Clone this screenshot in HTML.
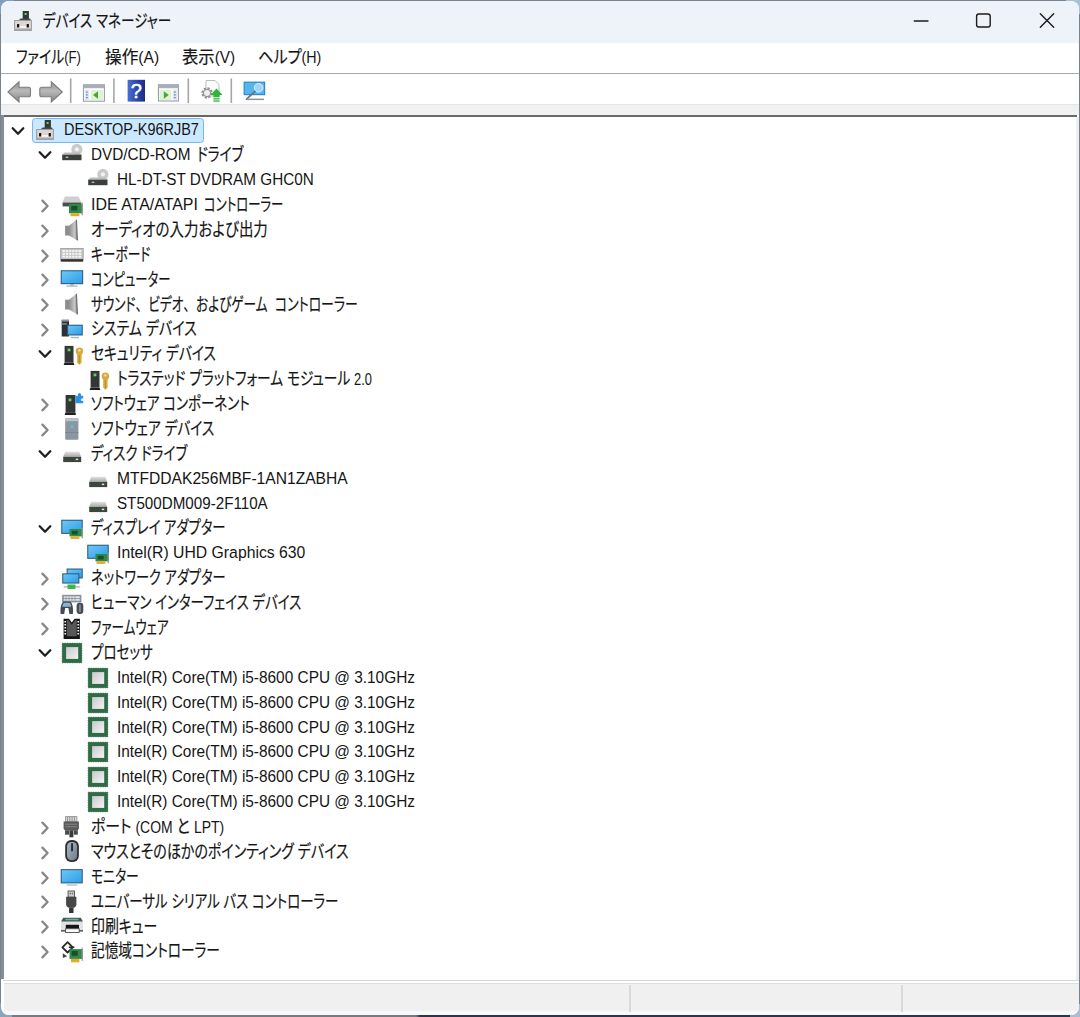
<!DOCTYPE html>
<html lang="ja"><head><meta charset="utf-8"><title>デバイス マネージャー</title>
<style>
html,body{margin:0;padding:0}
body{width:1080px;height:1017px;overflow:hidden;position:relative;background:#79838e;
 font-family:"Liberation Sans","Noto Sans CJK JP",sans-serif;color:#151515}
.bgtl{position:absolute;left:0;top:0;width:14px;height:14px;background:#7f9fc0}
.bgtr{position:absolute;right:0;top:0;width:14px;height:14px;background:#a5c2da}
.bgbot{position:absolute;left:0;top:1008px;width:1080px;height:9px;background:linear-gradient(90deg,#757b82 0,#757b82 416px,#2b3450 420px,#2b3450 100%)}
.bgbr{position:absolute;right:0;top:1004px;width:10px;height:13px;background:#a9bdd2}
.bgbl{position:absolute;left:0;top:1003px;width:12px;height:14px;background:#8aa4ba}
.win{position:absolute;left:1px;top:1px;width:1078px;height:1014px;border-radius:8px;background:#fff;overflow:hidden}
.titlebar{position:absolute;left:0;top:0;width:1078px;height:41.6px;background:#eef3fa}
.menusep{position:absolute;left:0;top:72.1px;width:1078px;height:1.3px;background:#a8a8a8}
.band{position:absolute;left:0;top:103.2px;width:1078px;height:11.3px;background:#f1f1f1;border-top:1px solid #e6e6e6;box-sizing:border-box}
.treetop{position:absolute;left:2px;top:114.1px;width:1073.5px;height:2.1px;background:#686868}
.treeleft{position:absolute;left:0;top:114.1px;width:2.8px;height:864.2px;background:#858d96}
.status{position:absolute;left:2.5px;top:982.2px;width:1078px;height:27.6px;background:#f0f0f0;border-top:1px solid #dedede;box-sizing:border-box}
.sline{position:absolute;left:2px;top:979px;width:1076px;height:1px;background:#d6d6d6}
.sbot{position:absolute;left:0;top:1009.8px;width:1078px;height:5px;background:#f8f8fa}
.ssep{position:absolute;top:984.3px;width:1.8px;height:27px;background:#d9d9d9}
.t{position:absolute;white-space:nowrap;line-height:30px;height:30px;transform-origin:0 50%;
 font-feature-settings:"palt";letter-spacing:0}
.j{-webkit-text-stroke:0.2px #151515}
.a{font-size:0.94em;-webkit-text-stroke:0}
.p{font-feature-settings:normal}
.sel{position:absolute;left:31px;top:116.6px;width:169.6px;height:23px;background:#cce8ff;border:1.2px solid #74b8ee;border-radius:3.5px}
svg{position:absolute;overflow:visible}
</style></head><body>
<div class="bgtl"></div><div class="bgtr"></div><div class="bgbot"></div><div class="bgbl"></div><div class="bgbr"></div>
<div class="win">
<div class="titlebar"></div>
<div class="menusep"></div>
<div class="band"></div>
<div class="treetop"></div>
<div class="treeleft"></div>
<div style="position:absolute;left:1075px;top:116px;width:3px;height:864px;background:#eeeeee"></div>
<div class="sline"></div>
<div class="status"></div>
<div class="sbot"></div>
<div class="ssep" style="left:628px"></div>
<div class="ssep" style="left:899.8px"></div>
<div class="sel"></div>

<div style="position:absolute;left:-1px;top:-1px;width:1080px;height:1017px">
<svg style="left:10.6px;top:9.1px" width="24" height="24" viewBox="-12 -12 24 24"><g transform="scale(1.0)"><rect x="-0.3" y="-10" width="6.2" height="9.5" fill="#2c3a32"/><rect x="1.6" y="-8" width="2" height="2" fill="#7fc47f"/><path d="M-4.5 -0.5L-2.5 -2.5H7L8 -0.5Z" fill="#4a4a4a"/><rect x="-8.4" y="-0.5" width="16.8" height="10" fill="#dcd6d6" stroke="#9b9b9b" stroke-width="1"/><rect x="-8.4" y="7.6" width="16.8" height="1.9" fill="#a9a9a9"/><rect x="-6" y="3" width="2.2" height="3.4" rx="0.6" fill="#111"/><rect x="3.7" y="3" width="2.2" height="3.4" rx="0.6" fill="#111"/><rect x="-3" y="5.2" width="6" height="1.4" fill="#fff"/></g></svg>
<span class="t j" id="title" style="left:42.5px;top:6.00px;font-size:17.57px;transform:scaleX(0.7711);">デバイス マネージャー</span>
<svg style="left:899.8px;top:0" width="170" height="41" viewBox="900 0 170 41" fill="none" stroke="#1b1b1b" stroke-width="1.4" stroke-linecap="round">
<path d="M914.3 21H928"/>
<rect x="976.6" y="14" width="13.6" height="13" rx="2.2"/>
<path d="M1040.3 13.8L1053.7 27.3M1053.7 13.8L1040.3 27.3"/></svg>
<span class="t j" id="m1" style="left:15.5px;top:41.80px;font-size:17.57px;transform:scaleX(0.7927);">ファイル<span class="a">(F)</span></span>
<span class="t j" id="m2" style="left:104.5px;top:41.80px;font-size:17.57px;transform:scaleX(0.9474);">操作<span class="a">(A)</span></span>
<span class="t j" id="m3" style="left:181.5px;top:41.80px;font-size:17.57px;transform:scaleX(0.9298);">表示<span class="a">(V)</span></span>
<span class="t j" id="m4" style="left:257.5px;top:41.80px;font-size:17.57px;transform:scaleX(0.8630);">ヘルプ<span class="a">(H)</span></span>
<svg width="0" height="0" style="left:0;top:0"><defs>
<linearGradient id="gscr" x1="0" y1="0" x2="1" y2="1"><stop offset="0" stop-color="#6cc6f7"/><stop offset="1" stop-color="#2e9fe6"/></linearGradient>
<linearGradient id="ggray" x1="0" y1="0" x2="0" y2="1"><stop offset="0" stop-color="#e2e2e2"/><stop offset="1" stop-color="#a8a8a8"/></linearGradient>
<linearGradient id="gspk" x1="0" y1="0" x2="1" y2="0"><stop offset="0" stop-color="#8e8e8e"/><stop offset="0.7" stop-color="#c9c9c9"/><stop offset="1" stop-color="#7a7a7a"/></linearGradient>
<linearGradient id="gmouse" x1="0" y1="0" x2="1" y2="1"><stop offset="0" stop-color="#a9b6c2"/><stop offset="1" stop-color="#6f7d8b"/></linearGradient>
<linearGradient id="ghelp" x1="0" y1="0" x2="1" y2="0"><stop offset="0" stop-color="#4a6fd0"/><stop offset="0.5" stop-color="#2d49ad"/><stop offset="1" stop-color="#1a2b86"/></linearGradient>
<linearGradient id="gcpu" x1="0" y1="0" x2="1" y2="1"><stop offset="0" stop-color="#c9c9c9"/><stop offset="1" stop-color="#f4f4f4"/></linearGradient>
<linearGradient id="garr" x1="0" y1="0" x2="0" y2="1"><stop offset="0" stop-color="#8f8f8f"/><stop offset="0.45" stop-color="#b9b9b9"/><stop offset="1" stop-color="#858585"/></linearGradient>
</defs></svg><svg style="left:0;top:74px" width="300" height="32" viewBox="0 74 300 32"><path d="M8 92L19 81.8V87.2H28.5Q30.5 87.2 30.5 89.2V94.8Q30.5 96.8 28.5 96.8H19V102Z" fill="url(#garr)" stroke="#7c7c7c" stroke-width="1.1"/><path d="M62.3 92L51.3 81.8V87.2H41.8Q39.8 87.2 39.8 89.2V94.8Q39.8 96.8 41.8 96.8H51.3V102Z" fill="url(#garr)" stroke="#7c7c7c" stroke-width="1.1"/><rect x="69.9" y="78.5" width="1.6" height="24.5" fill="#a6a6a6"/><rect x="113.10000000000001" y="78.5" width="1.6" height="24.5" fill="#a6a6a6"/><rect x="187.5" y="78.5" width="1.6" height="24.5" fill="#a6a6a6"/><rect x="230.5" y="78.5" width="1.6" height="24.5" fill="#a6a6a6"/><rect x="83.4" y="84.8" width="21" height="16.4" fill="#fdfdfd" stroke="#8f97a3" stroke-width="1"/><rect x="83.4" y="84.8" width="21" height="3.4" fill="#a9afb8"/><rect x="84.6" y="89.6" width="4.6" height="10.6" fill="#dfe6f3"/><path d="M86.9 91.5v1.2M86.9 94.3v1.2M86.9 97.1v1.2" stroke="#6a7fb5" stroke-width="1.6"/><rect x="90.8" y="90" width="12.4" height="10" fill="#dff3d2"/><path d="M93 95L98 91.3V98.7Z" fill="#4aa53a"/><rect x="127.6" y="79.8" width="17.4" height="21.8" fill="url(#ghelp)"/><text x="136.3" y="98" font-size="20" font-weight="normal" stroke="#fff" stroke-width="0.5" font-family="Liberation Sans,sans-serif" fill="#fff" text-anchor="middle">?</text><rect x="158.4" y="84.8" width="20" height="16.2" fill="#fdfdfd" stroke="#8f97a3" stroke-width="1"/><rect x="158.4" y="84.8" width="20" height="3.4" fill="#a9afb8"/><rect x="172.6" y="89.6" width="4.6" height="10.4" fill="#dfe6f3"/><path d="M174.9 91.5v1.2M174.9 94.3v1.2M174.9 97.1v1.2" stroke="#6a7fb5" stroke-width="1.6"/><rect x="159.6" y="90" width="11.6" height="10" fill="#dff3d2"/><path d="M168.8 95L163.8 91.3V98.7Z" fill="#4aa53a"/><path d="M206 80.5H215L219 84.5V96H206Z" fill="#fbfbfb" stroke="#b5b5b5" stroke-width="0.9"/><circle cx="207" cy="93" r="4.6" fill="#e9e9e9" stroke="#8e8e8e" stroke-width="2.2" stroke-dasharray="2.1 1.5"/><circle cx="207" cy="93" r="3.6" fill="#efefef" stroke="#8e8e8e" stroke-width="1"/><path d="M216.5 88.5L222.6 95H219.6V97.2H213.4V95H210.4Z" fill="#2fb53a"/><rect x="213.4" y="98.2" width="6.2" height="1.3" fill="#2fb53a"/><rect x="213.4" y="100.4" width="6.2" height="1.3" fill="#2fb53a"/><rect x="243.6" y="81.6" width="21.6" height="13.6" fill="#2f86c7"/><rect x="244.7" y="82.7" width="19.4" height="11.4" fill="#56b4ee"/><circle cx="258.6" cy="87.8" r="4.3" fill="#9fd6f5" stroke="#d9eefb" stroke-width="1"/><path d="M255.4 91L246 99.6" stroke="#6a7680" stroke-width="1.7"/><rect x="247" y="98.6" width="17" height="1.5" fill="#8a949c"/></svg>
<svg style="left:10.4px;top:122.50px" width="16" height="16" viewBox="-8 -8 16 16"><path d="M-5.3 -2.7L0 2.7L5.3 -2.7" fill="none" stroke="#1f1f1f" stroke-width="2.3" stroke-linecap="round" stroke-linejoin="round"/></svg>
<svg style="left:33.0px;top:118.30px" width="24" height="24" viewBox="-12 -12 24 24"><rect x="-0.3" y="-10" width="6.2" height="9.5" fill="#2c3a32"/><rect x="1.6" y="-8" width="2" height="2" fill="#7fc47f"/><path d="M-4.5 -0.5L-2.5 -2.5H7L8 -0.5Z" fill="#4a4a4a"/><rect x="-8.4" y="-0.5" width="16.8" height="10" fill="#dcd6d6" stroke="#9b9b9b" stroke-width="1"/><rect x="-8.4" y="7.6" width="16.8" height="1.9" fill="#a9a9a9"/><rect x="-6" y="3" width="2.2" height="3.4" rx="0.6" fill="#111"/><rect x="3.7" y="3" width="2.2" height="3.4" rx="0.6" fill="#111"/><rect x="-3" y="5.2" width="6" height="1.4" fill="#fff"/></svg>
<span class="t" id="r0" style="left:63.7px;top:115.40px;font-size:16.7px;transform:scaleX(0.8673);">DESKTOP-K96RJB7</span>
<svg style="left:36.8px;top:147.38px" width="16" height="16" viewBox="-8 -8 16 16"><path d="M-5.3 -2.7L0 2.7L5.3 -2.7" fill="none" stroke="#1f1f1f" stroke-width="2.3" stroke-linecap="round" stroke-linejoin="round"/></svg>
<svg style="left:59.8px;top:143.18px" width="24" height="24" viewBox="-12 -12 24 24"><circle cx="4.9" cy="-5.6" r="5.6" fill="#c9c9c9"/><circle cx="4.9" cy="-5.6" r="2.1" fill="#f2f2f2"/><path d="M-9.8 -0.4L-7.5 -2.6H7.5L9.5 -0.4Z" fill="#bdbdbd"/><rect x="-9.8" y="-0.4" width="19.3" height="5.6" fill="#3b403c"/><rect x="-6.3" y="1.6" width="2.6" height="1.3" fill="#b9c9b9"/></svg>
<span class="t" id="r1_0" style="left:90.5px;top:140.28px;font-size:16.7px;transform:scaleX(0.9167);">DVD/CD-ROM</span>
<span class="t j" id="r1_1" style="left:197.0px;top:140.28px;font-size:17.79px;transform:scaleX(0.7656);">ドライブ</span>
<svg style="left:85.9px;top:168.06px" width="24" height="24" viewBox="-12 -12 24 24"><circle cx="4.9" cy="-5.6" r="5.6" fill="#c9c9c9"/><circle cx="4.9" cy="-5.6" r="2.1" fill="#f2f2f2"/><path d="M-9.8 -0.4L-7.5 -2.6H7.5L9.5 -0.4Z" fill="#bdbdbd"/><rect x="-9.8" y="-0.4" width="19.3" height="5.6" fill="#3b403c"/><rect x="-6.3" y="1.6" width="2.6" height="1.3" fill="#b9c9b9"/></svg>
<span class="t" id="r2" style="left:117.0px;top:165.16px;font-size:16.7px;transform:scaleX(0.9163);">HL-DT-ST DVDRAM GHC0N</span>
<svg style="left:36.8px;top:197.84px" width="16" height="16" viewBox="-8 -8 16 16"><path d="M-2.6 -5.4L2.6 0L-2.6 5.4" fill="none" stroke="#878787" stroke-width="2.3" stroke-linecap="round" stroke-linejoin="round"/></svg>
<svg style="left:59.8px;top:192.94px" width="24" height="24" viewBox="-12 -12 24 24"><path d="M-9.4 -2.5L-7.2 -8.4H6.6L9.3 -2.5Z" fill="#cfcfcf"/><rect x="-9.4" y="-2.5" width="18.7" height="3.9" fill="#4b4f4c"/><rect x="-3" y="-1" width="13.8" height="9.3" fill="#2f8a4a"/><rect x="-0.7999999999999998" y="0.8" width="6.2" height="4.7" fill="#17502a"/><rect x="9.600000000000001" y="-2.5" width="1.2" height="12.8" fill="#9a9a9a"/><rect x="-1.5" y="8.3" width="8.9" height="2.8999999999999986" fill="#e7a926"/></svg>
<span class="t" id="r3_0" style="left:90.5px;top:190.04px;font-size:16.7px;transform:scaleX(0.9554);">IDE ATA/ATAPI</span>
<span class="t j" id="r3_1" style="left:203.7px;top:190.04px;font-size:17.79px;transform:scaleX(0.6956);">コントローラー</span>
<svg style="left:36.8px;top:222.72px" width="16" height="16" viewBox="-8 -8 16 16"><path d="M-2.6 -5.4L2.6 0L-2.6 5.4" fill="none" stroke="#878787" stroke-width="2.3" stroke-linecap="round" stroke-linejoin="round"/></svg>
<svg style="left:59.8px;top:217.82px" width="24" height="24" viewBox="-12 -12 24 24"><rect x="-6.9" y="-4.3" width="4.2" height="9.8" fill="#8d8d8d"/><path d="M-3 -4.3L4.4 -10.2L5.4 10.4L-3 5.5Z" fill="url(#gspk)"/><path d="M4.4 -10.2L5.4 10.4" stroke="#6e6e6e" stroke-width="1.2"/></svg>
<span class="t j" id="r4" style="left:90.5px;top:214.92px;font-size:17.79px;transform:scaleX(0.8134);">オーディオの入力および出力</span>
<svg style="left:36.8px;top:247.60px" width="16" height="16" viewBox="-8 -8 16 16"><path d="M-2.6 -5.4L2.6 0L-2.6 5.4" fill="none" stroke="#878787" stroke-width="2.3" stroke-linecap="round" stroke-linejoin="round"/></svg>
<svg style="left:59.8px;top:242.70px" width="24" height="24" viewBox="-12 -12 24 24"><rect x="-11.3" y="-6.6" width="22.5" height="11" fill="#c4c4c4" stroke="#9a9a9a" stroke-width="0.8"/><rect x="-9.6" y="-4.9" width="19" height="1.9" fill="#f6f6f6"/><rect x="-9.6" y="-2.1" width="19" height="1.9" fill="#f6f6f6"/><rect x="-9.6" y="0.7" width="19" height="1.9" fill="#f6f6f6"/><path d="M-6.5 -5V2.6M-3.4 -5V2.6M-0.3 -5V2.6M2.8 -5V2.6M5.9 -5V2.6" stroke="#c4c4c4" stroke-width="0.9"/><rect x="-11.3" y="4.2" width="22.5" height="2.5" fill="#333"/></svg>
<span class="t j" id="r5" style="left:90.5px;top:239.80px;font-size:17.79px;transform:scaleX(0.7169);">キーボード</span>
<svg style="left:36.8px;top:272.48px" width="16" height="16" viewBox="-8 -8 16 16"><path d="M-2.6 -5.4L2.6 0L-2.6 5.4" fill="none" stroke="#878787" stroke-width="2.3" stroke-linecap="round" stroke-linejoin="round"/></svg>
<svg style="left:59.8px;top:267.58px" width="24" height="24" viewBox="-12 -12 24 24"><rect x="-11.3" y="-9.8" width="22.5" height="14.0" fill="#2f5f86"/><rect x="-10.200000000000001" y="-8.700000000000001" width="20.3" height="11.8" fill="url(#gscr)"/><rect x="-2" y="4.2" width="4" height="1.4" fill="#9aa2a8"/><rect x="-5.5" y="5.4" width="11" height="1.5" fill="#b8bec4"/></svg>
<span class="t j" id="r6" style="left:90.5px;top:264.68px;font-size:17.79px;transform:scaleX(0.6913);">コンピューター</span>
<svg style="left:36.8px;top:297.36px" width="16" height="16" viewBox="-8 -8 16 16"><path d="M-2.6 -5.4L2.6 0L-2.6 5.4" fill="none" stroke="#878787" stroke-width="2.3" stroke-linecap="round" stroke-linejoin="round"/></svg>
<svg style="left:59.8px;top:292.46px" width="24" height="24" viewBox="-12 -12 24 24"><rect x="-6.9" y="-4.3" width="4.2" height="9.8" fill="#8d8d8d"/><path d="M-3 -4.3L4.4 -10.2L5.4 10.4L-3 5.5Z" fill="url(#gspk)"/><path d="M4.4 -10.2L5.4 10.4" stroke="#6e6e6e" stroke-width="1.2"/></svg>
<span class="t j" id="r7_0" style="left:90.5px;top:289.56px;font-size:17.79px;transform:scaleX(0.7113);">サウンド<span class="p">、</span>ビデオ<span class="p">、</span>およびゲーム</span>
<span class="t j" id="r7_1" style="left:275.0px;top:289.56px;font-size:17.79px;transform:scaleX(0.7246);">コントローラー</span>
<svg style="left:36.8px;top:322.24px" width="16" height="16" viewBox="-8 -8 16 16"><path d="M-2.6 -5.4L2.6 0L-2.6 5.4" fill="none" stroke="#878787" stroke-width="2.3" stroke-linecap="round" stroke-linejoin="round"/></svg>
<svg style="left:59.8px;top:317.34px" width="24" height="24" viewBox="-12 -12 24 24"><rect x="-10.3" y="-9.2" width="7.3" height="16.7" fill="#2c3136"/><rect x="-10.3" y="-9.2" width="7.3" height="1.8" fill="#8b9299"/><rect x="-10.3" y="-5.8" width="5" height="1.4" fill="#8b9299"/><rect x="-4.9" y="-4.3" width="15.700000000000001" height="10.8" fill="#2f5f86"/><rect x="-3.8000000000000003" y="-3.1999999999999997" width="13.5" height="8.600000000000001" fill="url(#gscr)"/><rect x="-1" y="7.8" width="8" height="1.4" fill="#a9b3bb"/></svg>
<span class="t j" id="r8" style="left:90.5px;top:314.44px;font-size:17.79px;transform:scaleX(0.7873);">システム デバイス</span>
<svg style="left:36.8px;top:346.42px" width="16" height="16" viewBox="-8 -8 16 16"><path d="M-5.3 -2.7L0 2.7L5.3 -2.7" fill="none" stroke="#1f1f1f" stroke-width="2.3" stroke-linecap="round" stroke-linejoin="round"/></svg>
<svg style="left:59.8px;top:342.22px" width="24" height="24" viewBox="-12 -12 24 24"><rect x="-7.4" y="-8.1" width="8.9" height="16.5" fill="#333735"/><path d="M-7.4 8.4L-8.4 11L2.4 11L1.5 8.4Z" fill="#1e1e1e"/><rect x="-4.4" y="-5.5" width="2.8" height="2.8" fill="#5fd35f"/><circle cx="7.4" cy="-2.7" r="3.7" fill="#d8a93c"/><circle cx="7.4" cy="-3.6" r="1.2" fill="#f6e2a4"/><path d="M5.2 0H9.6V8.8L7.4 10.8L5.2 8.8Z" fill="#d8a93c"/><path d="M7.4 1V9.5" stroke="#b98a28" stroke-width="0.9"/></svg>
<span class="t j" id="r9" style="left:90.5px;top:339.32px;font-size:17.79px;transform:scaleX(0.7733);">セキュリティ デバイス</span>
<svg style="left:85.9px;top:367.10px" width="24" height="24" viewBox="-12 -12 24 24"><rect x="-7.4" y="-8.1" width="8.9" height="16.5" fill="#333735"/><path d="M-7.4 8.4L-8.4 11L2.4 11L1.5 8.4Z" fill="#1e1e1e"/><rect x="-4.4" y="-5.5" width="2.8" height="2.8" fill="#5fd35f"/><circle cx="7.4" cy="-2.7" r="3.7" fill="#d8a93c"/><circle cx="7.4" cy="-3.6" r="1.2" fill="#f6e2a4"/><path d="M5.2 0H9.6V8.8L7.4 10.8L5.2 8.8Z" fill="#d8a93c"/><path d="M7.4 1V9.5" stroke="#b98a28" stroke-width="0.9"/></svg>
<span class="t j" id="r10" style="left:117.0px;top:364.20px;font-size:17.79px;transform:scaleX(0.7704);">トラステッド プラットフォーム モジュール <span class="a">2.0</span></span>
<svg style="left:36.8px;top:396.88px" width="16" height="16" viewBox="-8 -8 16 16"><path d="M-2.6 -5.4L2.6 0L-2.6 5.4" fill="none" stroke="#878787" stroke-width="2.3" stroke-linecap="round" stroke-linejoin="round"/></svg>
<svg style="left:59.8px;top:391.98px" width="24" height="24" viewBox="-12 -12 24 24"><rect x="-6.4" y="-9" width="9.8" height="17.6" fill="#333735"/><path d="M-6.4 8.6L-7.4 11.1L3.9 11.1L3.4 8.6Z" fill="#1e1e1e"/><rect x="-3.4" y="-5.5" width="2.8" height="2.8" fill="#5fd35f"/><path d="M3.4 -8.2H6V-9.6A1.5 1.5 0 0 1 9 -9.6V-8.2H11.2V-5.6H9.9A1.4 1.4 0 0 0 9.9 -2.9H11.2V-0.7H3.4Z" fill="#2f8fe3"/></svg>
<span class="t j" id="r11" style="left:90.5px;top:389.08px;font-size:17.79px;transform:scaleX(0.7584);">ソフトウェア コンポーネント</span>
<svg style="left:36.8px;top:421.76px" width="16" height="16" viewBox="-8 -8 16 16"><path d="M-2.6 -5.4L2.6 0L-2.6 5.4" fill="none" stroke="#878787" stroke-width="2.3" stroke-linecap="round" stroke-linejoin="round"/></svg>
<svg style="left:59.8px;top:416.86px" width="24" height="24" viewBox="-12 -12 24 24"><rect x="-6.8" y="-10.8" width="13.2" height="21.5" rx="1" fill="#8b96a2"/><rect x="-6.8" y="-10.8" width="13.2" height="3" rx="1" fill="#bcc4cb"/><rect x="-1.3" y="-3.8" width="2.6" height="2.8" fill="#57c4dd"/><rect x="-6.8" y="3" width="13.2" height="0.9" fill="#7a8591"/></svg>
<span class="t j" id="r12" style="left:90.5px;top:413.96px;font-size:17.79px;transform:scaleX(0.7719);">ソフトウェア デバイス</span>
<svg style="left:36.8px;top:445.94px" width="16" height="16" viewBox="-8 -8 16 16"><path d="M-5.3 -2.7L0 2.7L5.3 -2.7" fill="none" stroke="#1f1f1f" stroke-width="2.3" stroke-linecap="round" stroke-linejoin="round"/></svg>
<svg style="left:59.8px;top:441.74px" width="24" height="24" viewBox="-12 -12 24 24"><path d="M-8.8 2.8L-6.8 -2.2H7.2L9.2 2.8Z" fill="url(#ggray)"/><rect x="-8.8" y="2.8" width="18" height="5.3" fill="#3c463d"/><rect x="3.8" y="4.6" width="2.4" height="1.5" fill="#cfe6cf"/></svg>
<span class="t j" id="r13" style="left:90.5px;top:438.84px;font-size:17.79px;transform:scaleX(0.7598);">ディスク ドライブ</span>
<svg style="left:85.9px;top:466.62px" width="24" height="24" viewBox="-12 -12 24 24"><path d="M-8.8 2.8L-6.8 -2.2H7.2L9.2 2.8Z" fill="url(#ggray)"/><rect x="-8.8" y="2.8" width="18" height="5.3" fill="#3c463d"/><rect x="3.8" y="4.6" width="2.4" height="1.5" fill="#cfe6cf"/></svg>
<span class="t" id="r14" style="left:117.0px;top:463.72px;font-size:16.7px;transform:scaleX(0.9352);">MTFDDAK256MBF-1AN1ZABHA</span>
<svg style="left:85.9px;top:491.50px" width="24" height="24" viewBox="-12 -12 24 24"><path d="M-8.8 2.8L-6.8 -2.2H7.2L9.2 2.8Z" fill="url(#ggray)"/><rect x="-8.8" y="2.8" width="18" height="5.3" fill="#3c463d"/><rect x="3.8" y="4.6" width="2.4" height="1.5" fill="#cfe6cf"/></svg>
<span class="t" id="r15" style="left:117.0px;top:488.60px;font-size:16.7px;transform:scaleX(0.9096);">ST500DM009-2F110A</span>
<svg style="left:36.8px;top:520.58px" width="16" height="16" viewBox="-8 -8 16 16"><path d="M-5.3 -2.7L0 2.7L5.3 -2.7" fill="none" stroke="#1f1f1f" stroke-width="2.3" stroke-linecap="round" stroke-linejoin="round"/></svg>
<svg style="left:59.8px;top:516.38px" width="24" height="24" viewBox="-12 -12 24 24"><rect x="-10.8" y="-8.3" width="21.6" height="14.200000000000001" fill="#2f5f86"/><rect x="-9.700000000000001" y="-7.200000000000001" width="19.400000000000002" height="12.0" fill="url(#gscr)"/><rect x="-2.5" y="1" width="13.3" height="7.4" fill="#2f8a4a"/><rect x="-0.2999999999999998" y="2.8" width="6.0" height="3.7" fill="#17502a"/><rect x="9.600000000000001" y="-0.5" width="1.2" height="10.9" fill="#9a9a9a"/><rect x="-1.5" y="8.4" width="8.9" height="2.5" fill="#e7a926"/></svg>
<span class="t j" id="r16" style="left:90.5px;top:513.48px;font-size:17.79px;transform:scaleX(0.7472);">ディスプレイ アダプター</span>
<svg style="left:85.9px;top:541.26px" width="24" height="24" viewBox="-12 -12 24 24"><rect x="-10.8" y="-8.3" width="21.6" height="14.200000000000001" fill="#2f5f86"/><rect x="-9.700000000000001" y="-7.200000000000001" width="19.400000000000002" height="12.0" fill="url(#gscr)"/><rect x="-2.5" y="1" width="13.3" height="7.4" fill="#2f8a4a"/><rect x="-0.2999999999999998" y="2.8" width="6.0" height="3.7" fill="#17502a"/><rect x="9.600000000000001" y="-0.5" width="1.2" height="10.9" fill="#9a9a9a"/><rect x="-1.5" y="8.4" width="8.9" height="2.5" fill="#e7a926"/></svg>
<span class="t" id="r17" style="left:117.0px;top:538.36px;font-size:16.7px;transform:scaleX(0.9447);">Intel(R) UHD Graphics 630</span>
<svg style="left:36.8px;top:571.04px" width="16" height="16" viewBox="-8 -8 16 16"><path d="M-2.6 -5.4L2.6 0L-2.6 5.4" fill="none" stroke="#878787" stroke-width="2.3" stroke-linecap="round" stroke-linejoin="round"/></svg>
<svg style="left:59.8px;top:566.14px" width="24" height="24" viewBox="-12 -12 24 24"><rect x="-5.4" y="-9.5" width="16.200000000000003" height="10.0" fill="#2f5f86"/><rect x="-4.300000000000001" y="-8.4" width="14.000000000000004" height="7.8" fill="url(#gscr)"/><rect x="-9.8" y="-4.7" width="17.200000000000003" height="10.3" fill="#2f5f86"/><rect x="-8.700000000000001" y="-3.6" width="15.000000000000004" height="8.100000000000001" fill="url(#gscr)"/><rect x="-8.4" y="8" width="16.6" height="1.6" fill="#b9c0c6"/><rect x="-4.5" y="6.5" width="8" height="4.5" fill="#3cb64c"/></svg>
<span class="t j" id="r18" style="left:90.5px;top:563.24px;font-size:17.79px;transform:scaleX(0.7431);">ネットワーク アダプター</span>
<svg style="left:36.8px;top:595.92px" width="16" height="16" viewBox="-8 -8 16 16"><path d="M-2.6 -5.4L2.6 0L-2.6 5.4" fill="none" stroke="#878787" stroke-width="2.3" stroke-linecap="round" stroke-linejoin="round"/></svg>
<svg style="left:59.8px;top:591.02px" width="24" height="24" viewBox="-12 -12 24 24"><rect x="-9.9" y="-8.2" width="19.3" height="7.6" fill="#8d9299"/><rect x="-8.2" y="-6.6" width="15.9" height="1.7" fill="#e9ecf4"/><rect x="-8.2" y="-4" width="15.9" height="1.7" fill="#dfe6f2"/><path d="M-6 -6.6v4.3M-3 -6.6v4.3M0 -6.6v4.3M3 -6.6v4.3" stroke="#8d9299" stroke-width="0.8"/><path d="M-11.4 11C-12 4 -10.5 -1.6 -7.5 -1.6H-2.6C0.2 -1.6 1.6 4 0.9 11H-2.6L-3.6 5H-6.8L-7.8 11Z" fill="#454b52"/><path d="M-9.6 3.8C-9.4 1 -8.6 -0.3 -7.2 -0.3H-3C-1.8 -0.3 -1 1 -0.8 3.8Z" fill="#86b4d3"/><rect x="4.6" y="-0.2" width="6.7" height="11.3" rx="3" fill="#474c52"/><rect x="7.2" y="1.4" width="1.5" height="7.8" rx="0.7" fill="#8e9aa6"/></svg>
<span class="t j" id="r19" style="left:90.5px;top:588.12px;font-size:17.79px;transform:scaleX(0.7545);">ヒューマン インターフェイス デバイス</span>
<svg style="left:36.8px;top:620.80px" width="16" height="16" viewBox="-8 -8 16 16"><path d="M-2.6 -5.4L2.6 0L-2.6 5.4" fill="none" stroke="#878787" stroke-width="2.3" stroke-linecap="round" stroke-linejoin="round"/></svg>
<svg style="left:59.8px;top:615.90px" width="24" height="24" viewBox="-12 -12 24 24"><path d="M-8.4 -9.3H-3L-0.2 -5.4L2.6 -9.3H7.9V10.9H-8.4Z" fill="#141414"/><path d="M-5.2 -7.9H-3.6L-0.2 -3.3L3.2 -7.9H4.7V8.3H-5.2Z" fill="#575757"/><path d="M-7.6 -6.3H-5.9M-7.6 -3.3H-5.9M-7.6 -0.3H-5.9M-7.6 2.7H-5.9M-7.6 5.7H-5.9M5.4 -6.3H7.1M5.4 -3.3H7.1M5.4 -0.3H7.1M5.4 2.7H7.1M5.4 5.7H7.1" stroke="#efefef" stroke-width="1.4"/></svg>
<span class="t j" id="r20" style="left:90.5px;top:613.00px;font-size:17.79px;transform:scaleX(0.7045);">ファームウェア</span>
<svg style="left:36.8px;top:644.98px" width="16" height="16" viewBox="-8 -8 16 16"><path d="M-5.3 -2.7L0 2.7L5.3 -2.7" fill="none" stroke="#1f1f1f" stroke-width="2.3" stroke-linecap="round" stroke-linejoin="round"/></svg>
<svg style="left:59.8px;top:640.78px" width="24" height="24" viewBox="-12 -12 24 24"><rect x="-9.8" y="-9.8" width="19.6" height="19.6" fill="#2f6b46" stroke="#2f6b46" stroke-width="0.8" stroke-dasharray="1.2 1.2"/><rect x="-9.4" y="-9.4" width="18.8" height="18.8" fill="#2f6b46"/><rect x="-5.9" y="-5.9" width="12.1" height="11.8" fill="url(#gcpu)"/></svg>
<span class="t j" id="r21" style="left:90.5px;top:637.88px;font-size:17.79px;transform:scaleX(0.7593);">プロセッサ</span>
<svg style="left:85.9px;top:665.66px" width="24" height="24" viewBox="-12 -12 24 24"><rect x="-9.8" y="-9.8" width="19.6" height="19.6" fill="#2f6b46" stroke="#2f6b46" stroke-width="0.8" stroke-dasharray="1.2 1.2"/><rect x="-9.4" y="-9.4" width="18.8" height="18.8" fill="#2f6b46"/><rect x="-5.9" y="-5.9" width="12.1" height="11.8" fill="url(#gcpu)"/></svg>
<span class="t" id="r22" style="left:117.0px;top:662.76px;font-size:16.7px;transform:scaleX(0.9226);">Intel(R) Core(TM) i5-8600 CPU @ 3.10GHz</span>
<svg style="left:85.9px;top:690.54px" width="24" height="24" viewBox="-12 -12 24 24"><rect x="-9.8" y="-9.8" width="19.6" height="19.6" fill="#2f6b46" stroke="#2f6b46" stroke-width="0.8" stroke-dasharray="1.2 1.2"/><rect x="-9.4" y="-9.4" width="18.8" height="18.8" fill="#2f6b46"/><rect x="-5.9" y="-5.9" width="12.1" height="11.8" fill="url(#gcpu)"/></svg>
<span class="t" id="r23" style="left:117.0px;top:687.64px;font-size:16.7px;transform:scaleX(0.9226);">Intel(R) Core(TM) i5-8600 CPU @ 3.10GHz</span>
<svg style="left:85.9px;top:715.42px" width="24" height="24" viewBox="-12 -12 24 24"><rect x="-9.8" y="-9.8" width="19.6" height="19.6" fill="#2f6b46" stroke="#2f6b46" stroke-width="0.8" stroke-dasharray="1.2 1.2"/><rect x="-9.4" y="-9.4" width="18.8" height="18.8" fill="#2f6b46"/><rect x="-5.9" y="-5.9" width="12.1" height="11.8" fill="url(#gcpu)"/></svg>
<span class="t" id="r24" style="left:117.0px;top:712.52px;font-size:16.7px;transform:scaleX(0.9226);">Intel(R) Core(TM) i5-8600 CPU @ 3.10GHz</span>
<svg style="left:85.9px;top:740.30px" width="24" height="24" viewBox="-12 -12 24 24"><rect x="-9.8" y="-9.8" width="19.6" height="19.6" fill="#2f6b46" stroke="#2f6b46" stroke-width="0.8" stroke-dasharray="1.2 1.2"/><rect x="-9.4" y="-9.4" width="18.8" height="18.8" fill="#2f6b46"/><rect x="-5.9" y="-5.9" width="12.1" height="11.8" fill="url(#gcpu)"/></svg>
<span class="t" id="r25" style="left:117.0px;top:737.40px;font-size:16.7px;transform:scaleX(0.9226);">Intel(R) Core(TM) i5-8600 CPU @ 3.10GHz</span>
<svg style="left:85.9px;top:765.18px" width="24" height="24" viewBox="-12 -12 24 24"><rect x="-9.8" y="-9.8" width="19.6" height="19.6" fill="#2f6b46" stroke="#2f6b46" stroke-width="0.8" stroke-dasharray="1.2 1.2"/><rect x="-9.4" y="-9.4" width="18.8" height="18.8" fill="#2f6b46"/><rect x="-5.9" y="-5.9" width="12.1" height="11.8" fill="url(#gcpu)"/></svg>
<span class="t" id="r26" style="left:117.0px;top:762.28px;font-size:16.7px;transform:scaleX(0.9226);">Intel(R) Core(TM) i5-8600 CPU @ 3.10GHz</span>
<svg style="left:85.9px;top:790.06px" width="24" height="24" viewBox="-12 -12 24 24"><rect x="-9.8" y="-9.8" width="19.6" height="19.6" fill="#2f6b46" stroke="#2f6b46" stroke-width="0.8" stroke-dasharray="1.2 1.2"/><rect x="-9.4" y="-9.4" width="18.8" height="18.8" fill="#2f6b46"/><rect x="-5.9" y="-5.9" width="12.1" height="11.8" fill="url(#gcpu)"/></svg>
<span class="t" id="r27" style="left:117.0px;top:787.16px;font-size:16.7px;transform:scaleX(0.9226);">Intel(R) Core(TM) i5-8600 CPU @ 3.10GHz</span>
<svg style="left:36.8px;top:819.84px" width="16" height="16" viewBox="-8 -8 16 16"><path d="M-2.6 -5.4L2.6 0L-2.6 5.4" fill="none" stroke="#878787" stroke-width="2.3" stroke-linecap="round" stroke-linejoin="round"/></svg>
<svg style="left:59.8px;top:814.94px" width="24" height="24" viewBox="-12 -12 24 24"><rect x="-6.4" y="-10.4" width="11.3" height="5" fill="#d6d6d6" stroke="#8a8a8a" stroke-width="0.8"/><path d="M-4.5 -10V-6M-2.2 -10V-6M0.1 -10V-6M2.4 -10V-6" stroke="#8f8f8f" stroke-width="0.9"/><path d="M-8.4 -5.5H6.9V1.5L5.6 3.5H-7.1L-8.4 1.5Z" fill="#5a5a5a"/><rect x="-6.8" y="-3.4" width="12" height="1.3" fill="#7d7d7d"/><rect x="-6.8" y="-1" width="12" height="1.3" fill="#7d7d7d"/><rect x="-6.9" y="3.3" width="3.9" height="4.4" fill="#4a4a4a"/><rect x="1.9" y="3.3" width="3.9" height="4.4" fill="#4a4a4a"/><rect x="-2.6" y="3.3" width="4" height="7" fill="#3a3a3a"/></svg>
<span class="t j" id="r28" style="left:90.5px;top:812.04px;font-size:17.79px;transform:scaleX(0.8344);">ポート <span class="a">(COM</span> と <span class="a">LPT)</span></span>
<svg style="left:36.8px;top:844.72px" width="16" height="16" viewBox="-8 -8 16 16"><path d="M-2.6 -5.4L2.6 0L-2.6 5.4" fill="none" stroke="#878787" stroke-width="2.3" stroke-linecap="round" stroke-linejoin="round"/></svg>
<svg style="left:59.8px;top:839.82px" width="24" height="24" viewBox="-12 -12 24 24"><rect x="-6.8" y="-11.9" width="13.7" height="22" rx="6" fill="#2d2d2d"/><rect x="-5" y="-10.1" width="10.1" height="18.4" rx="4.6" fill="url(#gmouse)"/><rect x="-0.9" y="-8.9" width="1.9" height="8.4" rx="0.9" fill="#2b2b2b"/></svg>
<span class="t j" id="r29" style="left:90.5px;top:836.92px;font-size:17.79px;transform:scaleX(0.7875);">マウスとそのほかのポインティング デバイス</span>
<svg style="left:36.8px;top:869.60px" width="16" height="16" viewBox="-8 -8 16 16"><path d="M-2.6 -5.4L2.6 0L-2.6 5.4" fill="none" stroke="#878787" stroke-width="2.3" stroke-linecap="round" stroke-linejoin="round"/></svg>
<svg style="left:59.8px;top:864.70px" width="24" height="24" viewBox="-12 -12 24 24"><rect x="-11.3" y="-7.9" width="22.1" height="14.3" fill="#2f5f86"/><rect x="-10.200000000000001" y="-6.800000000000001" width="19.900000000000002" height="12.100000000000001" fill="url(#gscr)"/><rect x="-5.4" y="7.3" width="10.8" height="1.4" fill="#b8bec4"/></svg>
<span class="t j" id="r30" style="left:90.5px;top:861.80px;font-size:17.79px;transform:scaleX(0.7197);">モニター</span>
<svg style="left:36.8px;top:894.48px" width="16" height="16" viewBox="-8 -8 16 16"><path d="M-2.6 -5.4L2.6 0L-2.6 5.4" fill="none" stroke="#878787" stroke-width="2.3" stroke-linecap="round" stroke-linejoin="round"/></svg>
<svg style="left:59.8px;top:889.58px" width="24" height="24" viewBox="-12 -12 24 24"><rect x="-3.9" y="-11" width="6.4" height="6.2" fill="#d0d0d0" stroke="#5a5a5a" stroke-width="1"/><rect x="-2.4" y="-9.3" width="1.3" height="1.6" fill="#666"/><rect x="-0.2" y="-9.3" width="1.3" height="1.6" fill="#666"/><path d="M-5.9 -5.2H4.4V2.2C4.4 4.2 2.6 5.8 1.5 5.8H-2.9C-4.1 5.8 -5.9 4.2 -5.9 2.2Z" fill="#474747"/><rect x="-2.9" y="5.6" width="4.4" height="5.4" fill="#333"/></svg>
<span class="t j" id="r31" style="left:90.5px;top:886.68px;font-size:17.79px;transform:scaleX(0.7569);">ユニバーサル シリアル バス コントローラー</span>
<svg style="left:36.8px;top:919.36px" width="16" height="16" viewBox="-8 -8 16 16"><path d="M-2.6 -5.4L2.6 0L-2.6 5.4" fill="none" stroke="#878787" stroke-width="2.3" stroke-linecap="round" stroke-linejoin="round"/></svg>
<svg style="left:59.8px;top:914.46px" width="24" height="24" viewBox="-12 -12 24 24"><path d="M-11 -4.2L-8.8 -8.3H8.8L11 -4.2Z" fill="#4a5552"/><path d="M-6.5 -6.5H6.5" stroke="#67b39a" stroke-width="1.3"/><rect x="-11" y="-4.3" width="22" height="9.6" fill="#dde4e5"/><rect x="-11" y="4" width="22" height="1.6" fill="#59605f"/><rect x="-6.2" y="-1.2" width="13.2" height="4" rx="0.6" fill="#141414"/><rect x="-6.4" y="2.7" width="13.6" height="3.8" fill="#fafafa" stroke="#4c4c4c" stroke-width="0.9"/></svg>
<span class="t j" id="r32" style="left:90.5px;top:911.56px;font-size:17.79px;transform:scaleX(0.7824);">印刷キュー</span>
<svg style="left:36.8px;top:944.24px" width="16" height="16" viewBox="-8 -8 16 16"><path d="M-2.6 -5.4L2.6 0L-2.6 5.4" fill="none" stroke="#878787" stroke-width="2.3" stroke-linecap="round" stroke-linejoin="round"/></svg>
<svg style="left:59.8px;top:939.34px" width="24" height="24" viewBox="-12 -12 24 24"><path d="M-4.4 -8.9L0.8 -3.7L-4.4 1.5L-9.6 -3.7Z" fill="#fff" stroke="#2b2b2b" stroke-width="1.8" stroke-linejoin="round"/><path d="M-3.2 -3.7H2.4" stroke="#2b2b2b" stroke-width="1.5"/><path d="M-9.2 2.2L-4.8 5.2L-9.2 7Z" fill="#36424d"/><rect x="-2.5" y="-1.9" width="13.3" height="9.8" fill="#2f8a4a"/><rect x="-0.2999999999999998" y="-0.09999999999999987" width="6.0" height="4.9" fill="#17502a"/><rect x="9.600000000000001" y="-3.4" width="1.2" height="13.3" fill="#9a9a9a"/><rect x="-1" y="7.9" width="8.4" height="3.4000000000000004" fill="#e7a926"/></svg>
<span class="t j" id="r33" style="left:90.5px;top:936.44px;font-size:17.79px;transform:scaleX(0.7695);">記憶域コントローラー</span>
</div></div></body></html>
